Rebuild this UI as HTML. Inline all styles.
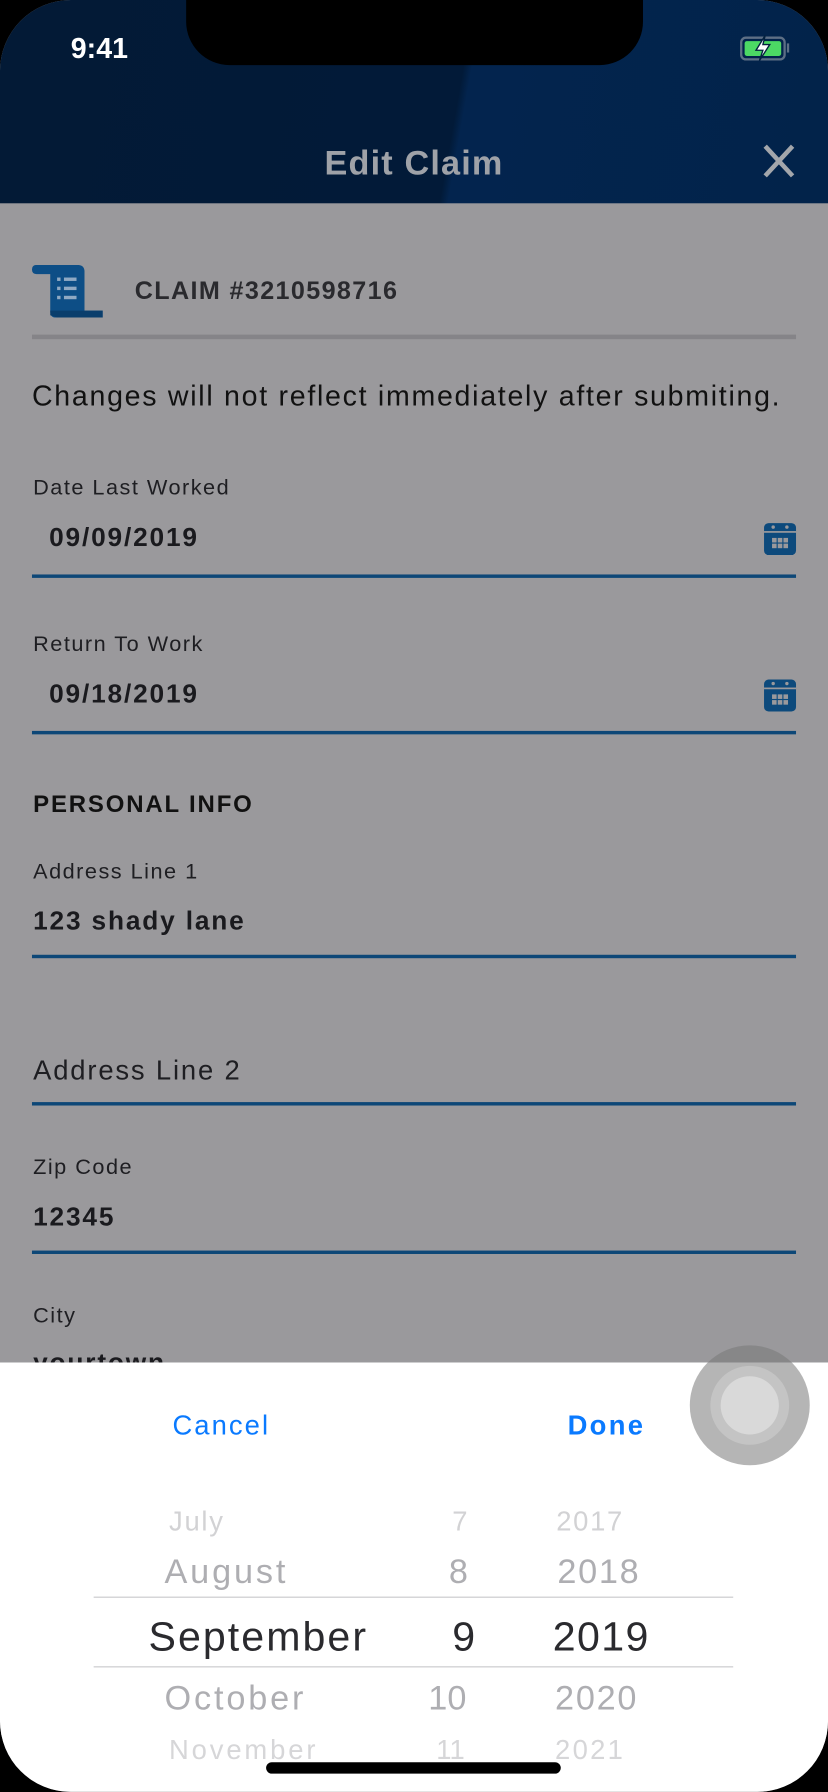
<!DOCTYPE html>
<html><head><meta charset="utf-8"><style>
html,body{margin:0;padding:0;background:#000;width:828px;height:1792px;overflow:hidden}
#w{position:absolute;left:0;top:0;width:725px;height:1569px;transform:scale(1.14207);transform-origin:0 0;overflow:hidden;border-radius:62px;background:#9a999c;font-family:"Liberation Sans",sans-serif}
.a{position:absolute;white-space:nowrap}
.lbl{font-size:19px;color:#1e1e22;left:29px;letter-spacing:1.3px}
.val{font-size:23px;font-weight:bold;color:#1a1a1e;letter-spacing:1.6px}
.ln{position:absolute;left:28px;width:669px;height:3px;background:#0d4777}
.pk{position:absolute;font-size:33px;line-height:40px}
</style></head><body><div id="w">
<div class="a" style="left:0;top:0;width:725px;height:178px;background:linear-gradient(100deg,#031a36 0%,#021a38 55%,#03244e 56%,#02234a 100%)"></div>
<div class="a" style="left:163px;top:0;width:400px;height:57px;background:#000;border-radius:0 0 38px 38px"></div>
<div class="a" style="left:62px;top:28px;font-size:25px;color:#fff;font-weight:bold;line-height:30px">9:41</div>
<div class="a" style="left:648px;top:32px;width:40px;height:21px;border:2px solid #5d6f85;border-radius:5px;box-sizing:border-box;padding:2px"><div style="width:100%;height:100%;background:#4cd964;border-radius:2px"></div></div>
<div class="a" style="left:689px;top:38px;width:2px;height:8px;background:#5d6f85"></div>
<svg class="a" style="left:659px;top:30px" width="18" height="24" viewBox="0 0 18 24"><path d="M11 1L3 14H9L6 23L15 9H9Z" fill="#fff" stroke="#03213f" stroke-width="1.2"/></svg>
<div class="a" style="left:0;top:124px;width:725px;text-align:center;font-size:30px;font-weight:bold;color:#9fa2a8;line-height:40px;letter-spacing:1px">Edit Claim</div>
<svg class="a" style="left:667px;top:125px" width="30" height="32" viewBox="0 0 30 32"><path d="M3 3L27 29M27 3L3 29" stroke="#a3a6ab" stroke-width="4"/></svg>
<svg class="a" style="left:28px;top:232px" width="62" height="46" viewBox="0 0 62 46"><path d="M4 0H40Q46 0 46 6V40H62V46H20Q16 46 16 40V8H4Q0 8 0 4Q0 0 4 0Z" fill="#0d4e86"/><path d="M16 40V44L22 46H62V40Z" fill="#0a3e6c"/><rect x="22" y="11" width="3" height="3" fill="#8fa9c3"/><rect x="28" y="11" width="11" height="3" fill="#8fa9c3"/><rect x="22" y="19" width="3" height="3" fill="#8fa9c3"/><rect x="28" y="19" width="11" height="3" fill="#8fa9c3"/><rect x="22" y="27" width="3" height="3" fill="#8fa9c3"/><rect x="28" y="27" width="11" height="3" fill="#8fa9c3"/></svg>
<div class="a" style="left:118px;top:242px;font-size:22px;font-weight:bold;color:#2a2a2e;line-height:26px;letter-spacing:1.2px">CLAIM #3210598716</div>
<div class="a" style="left:28px;top:293px;width:669px;height:4px;background:#858488"></div>
<div class="a" style="left:28px;top:332px;font-size:25px;color:#111;line-height:30px;letter-spacing:1.5px">Changes will not reflect immediately after submiting.</div>
<div class="a lbl" style="top:417px">Date Last Worked</div>
<div class="a val" style="left:43px;top:457px">09/09/2019</div>
<div class="ln" style="top:503px"></div>
<div class="a lbl" style="top:554px">Return To Work</div>
<div class="a val" style="left:43px;top:594px">09/18/2019</div>
<div class="ln" style="top:640px"></div>
<svg class="a" style="left:668px;top:457px" width="30" height="30" viewBox="0 0 30 30"><rect x="1" y="1" width="28" height="28" rx="4" fill="#0d4a7c"/><rect x="1" y="8" width="28" height="1.5" fill="#9a999c"/><circle cx="9" cy="4.5" r="1.5" fill="#9a999c"/><circle cx="21" cy="4.5" r="1.5" fill="#9a999c"/><g fill="#9a999c"><rect x="8" y="14" width="4" height="4"/><rect x="13" y="14" width="4" height="4"/><rect x="18" y="14" width="4" height="4"/><rect x="8" y="19" width="4" height="4"/><rect x="13" y="19" width="4" height="4"/><rect x="18" y="19" width="4" height="4"/></g></svg>
<svg class="a" style="left:668px;top:594px" width="30" height="30" viewBox="0 0 30 30"><rect x="1" y="1" width="28" height="28" rx="4" fill="#0d4a7c"/><rect x="1" y="8" width="28" height="1.5" fill="#9a999c"/><circle cx="9" cy="4.5" r="1.5" fill="#9a999c"/><circle cx="21" cy="4.5" r="1.5" fill="#9a999c"/><g fill="#9a999c"><rect x="8" y="14" width="4" height="4"/><rect x="13" y="14" width="4" height="4"/><rect x="18" y="14" width="4" height="4"/><rect x="8" y="19" width="4" height="4"/><rect x="13" y="19" width="4" height="4"/><rect x="18" y="19" width="4" height="4"/></g></svg>
<div class="a" style="left:29px;top:693px;font-size:21px;font-weight:bold;color:#111;letter-spacing:1.6px">PERSONAL INFO</div>
<div class="a lbl" style="top:753px">Address Line 1</div>
<div class="a val" style="left:29px;top:793px">123 shady lane</div>
<div class="ln" style="top:836px"></div>
<div class="a" style="left:29px;top:924px;font-size:24px;color:#1e1e22;letter-spacing:1.6px">Address Line 2</div>
<div class="ln" style="top:965px"></div>
<div class="a lbl" style="top:1012px">Zip Code</div>
<div class="a val" style="left:29px;top:1052px">12345</div>
<div class="ln" style="top:1095px"></div>
<div class="a lbl" style="top:1142px">City</div>
<div class="a val" style="left:29px;top:1180px">yourtown</div>
<div class="a" style="left:0;top:1193px;width:725px;height:376px;background:#fff"></div>
<div class="a" style="left:151px;top:1235px;font-size:24px;color:#0a7aff;letter-spacing:1.8px">Cancel</div>
<div class="a" style="left:497px;top:1235px;font-size:24px;font-weight:bold;color:#0a7aff;letter-spacing:2px">Done</div>
<div class="a" style="left:604px;top:1178px;width:105px;height:105px;border-radius:50%;background:rgba(120,120,120,.55)"></div>
<div class="a" style="left:622px;top:1196px;width:69px;height:69px;border-radius:50%;background:#c4c4c4"></div>
<div class="a" style="left:631px;top:1205px;width:51px;height:51px;border-radius:50%;background:#d9d9d9"></div>
<div class="a" style="left:82px;top:1398px;width:560px;height:1px;background:#c8c8cc"></div>
<div class="a" style="left:82px;top:1459px;width:560px;height:1px;background:#c8c8cc"></div>
<div class="pk" style="left:148px;top:1313px;font-size:24px;color:#d2d2d4;letter-spacing:1.5px">July</div>
<div class="pk" style="left:396px;top:1313px;font-size:24px;color:#d2d2d4">7</div>
<div class="pk" style="left:487px;top:1313px;font-size:24px;color:#d2d2d4;letter-spacing:1.5px">2017</div>
<div class="pk" style="left:144px;top:1357px;font-size:30px;color:#aeaeb2;letter-spacing:2.5px">August</div>
<div class="pk" style="left:393px;top:1357px;font-size:30px;color:#aeaeb2">8</div>
<div class="pk" style="left:488px;top:1357px;font-size:30px;color:#aeaeb2;letter-spacing:1.5px">2018</div>
<div class="pk" style="left:130px;top:1413px;font-size:36px;color:#2a2a2e;letter-spacing:1.8px">September</div>
<div class="pk" style="left:396px;top:1413px;font-size:36px;color:#2a2a2e">9</div>
<div class="pk" style="left:484px;top:1413px;font-size:36px;color:#2a2a2e;letter-spacing:1.2px">2019</div>
<div class="pk" style="left:144px;top:1468px;font-size:30px;color:#aeaeb2;letter-spacing:2.5px">October</div>
<div class="pk" style="left:375px;top:1468px;font-size:30px;color:#aeaeb2">10</div>
<div class="pk" style="left:486px;top:1468px;font-size:30px;color:#aeaeb2;letter-spacing:1.5px">2020</div>
<div class="pk" style="left:148px;top:1513px;font-size:24px;color:#d6d6d8;letter-spacing:2.5px">November</div>
<div class="pk" style="left:382px;top:1513px;font-size:24px;color:#d6d6d8">11</div>
<div class="pk" style="left:486px;top:1513px;font-size:24px;color:#d6d6d8;letter-spacing:2px">2021</div>
<div class="a" style="left:233px;top:1543px;width:258px;height:10px;border-radius:5px;background:#000"></div>
</div></body></html>
